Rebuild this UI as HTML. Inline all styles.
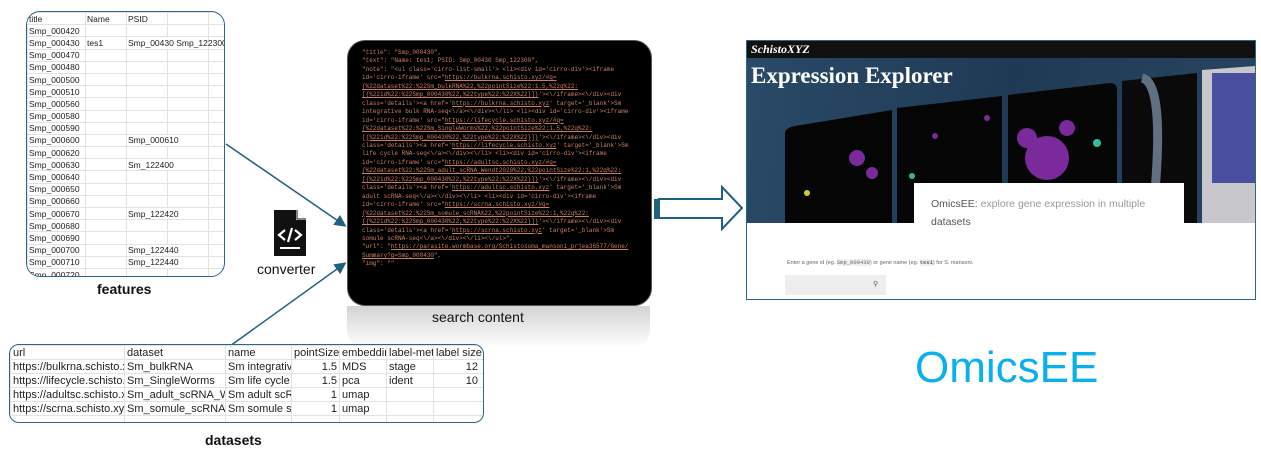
<!DOCTYPE html>
<html><head><style>
body{margin:0;width:1261px;height:454px;background:#fff;position:relative;overflow:hidden;font-family:"Liberation Sans",sans-serif}
.abs{position:absolute}
table{border-collapse:collapse}
.ft td{border:1px solid #e2e2e2;height:11.2px;padding:0 1px;font-size:8.5px;color:#222;white-space:nowrap;overflow:visible}
.dt td{border:1px solid #e2e2e2;height:13px;padding:0 2px;font-size:11px;color:#222;white-space:nowrap;overflow:hidden}
.code{font-family:"Liberation Mono",monospace;font-size:6px;line-height:8.45px;color:#c98062;white-space:pre}
.code u{text-decoration:underline}
</style></head><body>
<!-- features table -->
<div class="abs" style="left:26px;top:11px;width:197px;height:264px;border:1.5px solid #2a6888;border-radius:14px;overflow:hidden">
<table class="ft" style="table-layout:fixed;width:200px">
<colgroup><col style="width:58px"><col style="width:41px"><col style="width:41px"><col style="width:41px"><col style="width:19px"></colgroup>
<tr><td>title</td><td>Name</td><td>PSID</td><td></td><td></td></tr>
<tr><td>Smp_000420</td><td></td><td></td><td></td><td></td></tr>
<tr><td>Smp_000430</td><td>tes1</td><td colspan="2">Smp_00430 Smp_122300</td><td></td></tr>
<tr><td>Smp_000470</td><td></td><td></td><td></td><td></td></tr>
<tr><td>Smp_000480</td><td></td><td></td><td></td><td></td></tr>
<tr><td>Smp_000500</td><td></td><td></td><td></td><td></td></tr>
<tr><td>Smp_000510</td><td></td><td></td><td></td><td></td></tr>
<tr><td>Smp_000560</td><td></td><td></td><td></td><td></td></tr>
<tr><td>Smp_000580</td><td></td><td></td><td></td><td></td></tr>
<tr><td>Smp_000590</td><td></td><td></td><td></td><td></td></tr>
<tr><td>Smp_000600</td><td></td><td colspan="2">Smp_000610</td><td></td></tr>
<tr><td>Smp_000620</td><td></td><td></td><td></td><td></td></tr>
<tr><td>Smp_000630</td><td></td><td colspan="2">Sm_122400</td><td></td></tr>
<tr><td>Smp_000640</td><td></td><td></td><td></td><td></td></tr>
<tr><td>Smp_000650</td><td></td><td></td><td></td><td></td></tr>
<tr><td>Smp_000660</td><td></td><td></td><td></td><td></td></tr>
<tr><td>Smp_000670</td><td></td><td colspan="2">Smp_122420</td><td></td></tr>
<tr><td>Smp_000680</td><td></td><td></td><td></td><td></td></tr>
<tr><td>Smp_000690</td><td></td><td></td><td></td><td></td></tr>
<tr><td>Smp_000700</td><td></td><td colspan="2">Smp_122440</td><td></td></tr>
<tr><td>Smp_000710</td><td></td><td colspan="2">Smp_122440</td><td></td></tr>
<tr><td>Smp_000720</td><td></td><td></td><td></td><td></td></tr>
</table></div>
<div class="abs" style="left:97px;top:281px;font-size:14px;font-weight:bold;color:#111">features</div>

<!-- converter icon -->
<svg class="abs" style="left:272px;top:210px" width="36" height="48" viewBox="0 0 36 48">
<path d="M2 0H24L34 10V46H2Z" fill="#111"/><path d="M24 0V10H34" fill="#fff"/><path d="M25 0V9H34" fill="none" stroke="#111" stroke-width="1"/>
<path d="M13 20L7 25L13 30M23 20L29 25L23 30M20 18L16 32" stroke="#fff" stroke-width="2.2" fill="none"/>
<rect x="8" y="37" width="20" height="2" fill="#fff"/></svg>
<div class="abs" style="left:257px;top:261px;font-size:14px;color:#111">converter</div>

<!-- arrows -->
<svg class="abs" style="left:0;top:0" width="1261" height="454">
<defs><marker id="m" markerWidth="8" markerHeight="8" refX="6" refY="4" orient="auto"><path d="M0 0L8 4L0 8Z" fill="#1f6080"/></marker></defs>
<line x1="226" y1="144" x2="344" y2="225" stroke="#1f6080" stroke-width="1.5" marker-end="url(#m)"/>
<line x1="230" y1="346" x2="344" y2="264" stroke="#1f6080" stroke-width="1.5" marker-end="url(#m)"/>
<rect x="654" y="199" width="5" height="20" fill="#1f6080"/>
<path d="M659 199H722V187L742 208L722 229V218H659Z" fill="#fff" stroke="#1f6080" stroke-width="2"/>
</svg>

<!-- code box -->
<div class="abs" style="left:347px;top:40px;width:303px;height:264px;background:#000;border-radius:18px;border:1px solid #555"></div>
<div class="abs" style="left:347px;top:306px;width:303px;height:42px;background:linear-gradient(#c8c8c8,#fff);border-radius:0 0 18px 18px;opacity:.8"></div>
<div class="abs code" style="left:362px;top:49px">"title": "Smp_000430",
"text": "Name: tes1; PSID: Smp_00430 Smp_122300",
"note": "&lt;ul class='cirro-list-small'&gt; &lt;li&gt;&lt;div id='cirro-div'&gt;&lt;iframe
id='cirro-iframe' src="<u>https://bulkrna.schisto.xyz/#q=</u>
<u>{%22dataset%22:%22Sm_bulkRNA%22,%22pointSize%22:1.5,%22q%22:</u>
<u>[{%22id%22:%22Smp_000430%22,%22type%22:%22X%22}]}</u>'&gt;&lt;\/iframe&gt;&lt;\/div&gt;&lt;div
class='details'&gt;&lt;a href='<u>https://bulkrna.schisto.xyz</u>' target='_blank'&gt;Sm
integrative bulk RNA-seq&lt;\/a&gt;&lt;\/div&gt;&lt;\/li&gt; &lt;li&gt;&lt;div id='cirro-div'&gt;&lt;iframe
id='cirro-iframe' src="<u>https://lifecycle.schisto.xyz/#q=</u>
<u>{%22dataset%22:%22Sm_SingleWorms%22,%22pointSize%22:1.5,%22q%22:</u>
<u>[{%22id%22:%22Smp_000430%22,%22type%22:%22X%22}]}</u>'&gt;&lt;\/iframe&gt;&lt;\/div&gt;&lt;div
class='details'&gt;&lt;a href='<u>https://lifecycle.schisto.xyz</u>' target='_blank'&gt;Sm
life cycle RNA-seq&lt;\/a&gt;&lt;\/div&gt;&lt;\/li&gt; &lt;li&gt;&lt;div id='cirro-div'&gt;&lt;iframe
id='cirro-iframe' src="<u>https://adultsc.schisto.xyz/#q=</u>
<u>{%22dataset%22:%22Sm_adult_scRNA_Wendt2020%22,%22pointSize%22:1,%22q%22:</u>
<u>[{%22id%22:%22Smp_000430%22,%22type%22:%22X%22}]}</u>'&gt;&lt;\/iframe&gt;&lt;\/div&gt;&lt;div
class='details'&gt;&lt;a href='<u>https://adultsc.schisto.xyz</u>' target='_blank'&gt;Sm
adult scRNA-seq&lt;\/a&gt;&lt;\/div&gt;&lt;\/li&gt; &lt;li&gt;&lt;div id='cirro-div'&gt;&lt;iframe
id='cirro-iframe' src="<u>https://scrna.schisto.xyz/#q=</u>
<u>{%22dataset%22:%22Sm_somule_scRNA%22,%22pointSize%22:1,%22q%22:</u>
<u>[{%22id%22:%22Smp_000430%22,%22type%22:%22X%22}]}</u>'&gt;&lt;\/iframe&gt;&lt;\/div&gt;&lt;div
class='details'&gt;&lt;a href='<u>https://scrna.schisto.xyz</u>' target='_blank'&gt;Sm
somule scRNA-seq&lt;\/a&gt;&lt;\/div&gt;&lt;\/li&gt;&lt;\/ul&gt;",
"url": "<u>https://parasite.wormbase.org/Schistosoma_mansoni_prjea36577/Gene/</u>
<u>Summary?g=Smp_000430</u>",
"img": ""</div>
<div class="abs" style="left:432px;top:309px;font-size:14px;color:#111">search content</div>

<!-- webpage -->
<div class="abs" style="left:746px;top:40px;width:508px;height:258px;border:1.5px solid #2a6888;overflow:hidden;background:#fff">
 <div class="abs" style="left:0;top:0;width:508px;height:17px;background:#111"></div>
 <div class="abs" style="left:4px;top:1px;color:#fff;font-family:'Liberation Serif',serif;font-style:italic;font-weight:bold;font-size:12px">SchistoXYZ</div>
 <div class="abs" style="left:0;top:17px;width:508px;height:165px;background:linear-gradient(100deg,#2a4a68,#1f3a55 50%,#28455f)"></div>
 <div class="abs" style="left:4px;top:22px;color:#fff;font-family:'Liberation Serif',serif;font-weight:bold;font-size:23px">Expression Explorer</div>
 <svg class="abs" style="left:0;top:17px" width="508" height="165">
  <path d="M38 75Q38 70 48 68L145 52V165H38Z" fill="#050505"/>
  <path d="M150 50L255 38V165H150Z" fill="#050505"/>
  <path d="M261 37L363 25Q370 25 370 32V165H261Z" fill="#060606"/>
  <path d="M375 23L450 15V165H375Z" fill="#0a0a0a"/>
  <path d="M455 12L508 8V165H455Z" fill="#c8c8cc"/>
  <rect x="465" y="15" width="43" height="110" fill="#4a4fa0"/>
  <path d="M395 20Q420 25 405 165" stroke="#607080" stroke-width="9" fill="none"/>
  <g fill="#7a2a9a"><circle cx="110" cy="100" r="8"/><circle cx="125" cy="115" r="6"/><circle cx="300" cy="100" r="22"/><circle cx="280" cy="80" r="10"/><circle cx="320" cy="70" r="8"/><circle cx="240" cy="60" r="3"/><circle cx="188" cy="78" r="3"/></g>
  <circle cx="60" cy="135" r="3" fill="#d0d020"/><circle cx="165" cy="118" r="3" fill="#30c080"/><circle cx="350" cy="85" r="4" fill="#30c0a0"/>
 </svg>
 <div class="abs" style="left:167px;top:142px;width:270px;height:40px;background:#fff"></div>
 <div class="abs" style="left:184px;top:154px;font-size:10.5px;line-height:18px;color:#999;width:240px"><span style="color:#555">OmicsEE:</span> explore gene expression in multiple <span style="color:#555">datasets</span></div>
 <div class="abs" style="left:40px;top:218px;font-size:5.5px;color:#666">Enter a gene id (eg. <span style="font-family:'Liberation Mono';background:#f0f0f0">Smp_000430</span>) or gene name (eg. <span style="font-family:'Liberation Mono';background:#f0f0f0;font-weight:bold">tes1</span>) for S. mansoni.</div>
 <div class="abs" style="left:38px;top:234px;width:101px;height:20px;background:#eee"></div>
 <div class="abs" style="left:126px;top:239px;font-size:7px;color:#555">⚲</div>
</div>
<div class="abs" style="left:915px;top:343px;font-size:44px;color:#0ab0ee">OmicsEE</div>

<!-- datasets table -->
<div class="abs" style="left:9px;top:344px;width:473px;height:77px;border:1.5px solid #2a6888;border-radius:10px;overflow:hidden">
<table class="dt" style="table-layout:fixed;width:480px">
<colgroup><col style="width:114px"><col style="width:101px"><col style="width:66px"><col style="width:48px"><col style="width:47px"><col style="width:47px"><col style="width:57px"></colgroup>
<tr><td>url</td><td>dataset</td><td>name</td><td>pointSize</td><td>embeddin</td><td>label-met</td><td>label size</td></tr>
<tr><td>https://bulkrna.schisto.x</td><td>Sm_bulkRNA</td><td>Sm integrative</td><td style="text-align:right">1.5</td><td>MDS</td><td>stage</td><td style="text-align:right;padding-right:12px">12</td></tr>
<tr><td>https://lifecycle.schisto.</td><td>Sm_SingleWorms</td><td>Sm life cycle R</td><td style="text-align:right">1.5</td><td>pca</td><td>ident</td><td style="text-align:right;padding-right:12px">10</td></tr>
<tr><td>https://adultsc.schisto.x</td><td>Sm_adult_scRNA_Wen</td><td>Sm adult scRN</td><td style="text-align:right">1</td><td>umap</td><td></td><td></td></tr>
<tr><td>https://scrna.schisto.xyz</td><td>Sm_somule_scRNA</td><td>Sm somule scl</td><td style="text-align:right">1</td><td>umap</td><td></td><td></td></tr>
<tr><td></td><td></td><td></td><td></td><td></td><td></td><td></td></tr>
</table></div>
<div class="abs" style="left:205px;top:432px;font-size:14px;font-weight:bold;color:#111">datasets</div>
</body></html>
